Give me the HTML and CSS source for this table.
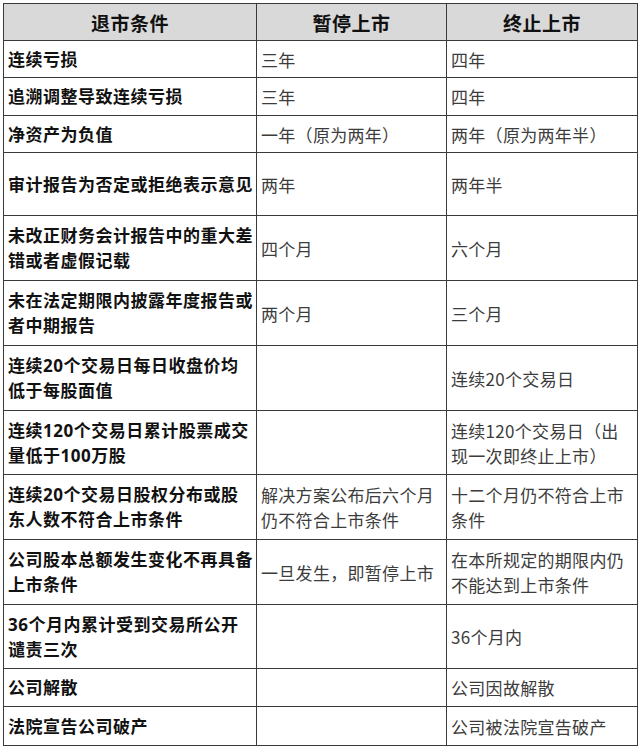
FILE: index.html
```html
<!DOCTYPE html>
<html lang="zh-CN">
<head>
<meta charset="utf-8">
<title>退市条件</title>
<link rel="stylesheet" href="styles.css">
</head>
<body>
<table class="delist">
  <colgroup>
    <col class="c1">
    <col class="c2">
    <col class="c3">
  </colgroup>
  <thead>
    <tr class="head">
      <th>退市条件</th>
      <th>暂停上市</th>
      <th>终止上市</th>
    </tr>
  </thead>
  <tbody>
    <tr class="r37"><td class="cond">连续亏损</td><td>三年</td><td>四年</td></tr>
    <tr class="r38"><td class="cond">追溯调整导致连续亏损</td><td>三年</td><td>四年</td></tr>
    <tr class="r37"><td class="cond">净资产为负值</td><td>一年（原为两年）</td><td>两年（原为两年半）</td></tr>
    <tr class="r63"><td class="cond">审计报告为否定或拒绝表示意见</td><td>两年</td><td>两年半</td></tr>
    <tr class="r65"><td class="cond">未改正财务会计报告中的重大差错或者虚假记载</td><td>四个月</td><td>六个月</td></tr>
    <tr class="r65"><td class="cond">未在法定期限内披露年度报告或者中期报告</td><td>两个月</td><td>三个月</td></tr>
    <tr class="r65"><td class="cond">连续20个交易日每日收盘价均低于每股面值</td><td></td><td>连续20个交易日</td></tr>
    <tr class="r64"><td class="cond">连续120个交易日累计股票成交量低于100万股</td><td></td><td>连续120个交易日（出现一次即终止上市）</td></tr>
    <tr class="r65"><td class="cond">连续20个交易日股权分布或股东人数不符合上市条件</td><td>解决方案公布后六个月仍不符合上市条件</td><td>十二个月仍不符合上市条件</td></tr>
    <tr class="r65"><td class="cond">公司股本总额发生变化不再具备上市条件</td><td>一旦发生，即暂停上市</td><td>在本所规定的期限内仍不能达到上市条件</td></tr>
    <tr class="r64"><td class="cond">36个月内累计受到交易所公开谴责三次</td><td></td><td>36个月内</td></tr>
    <tr class="r38"><td class="cond">公司解散</td><td></td><td>公司因故解散</td></tr>
    <tr class="r39"><td class="cond">法院宣告公司破产</td><td></td><td>公司被法院宣告破产</td></tr>
  </tbody>
</table>
</body>
</html>
```

FILE: styles.css
```css
html, body {
  margin: 0;
  padding: 0;
  background: #ffffff;
}

body {
  padding: 3px 0 0 3px;
  font-family: "Noto Sans CJK SC", "Noto Sans", "Liberation Sans", sans-serif;
}

.delist {
  border-collapse: collapse;
  table-layout: fixed;
  width: 634px;
}

.c1 { width: 253px; }
.c2 { width: 190px; }
.c3 { width: 191px; }

.delist th,
.delist td {
  border: 1px solid #3a3a3a;
  padding: 0 4px;
  font-size: 17px;
  line-height: 25px;
  vertical-align: middle;
  text-align: left;
  color: #3c3c3c;
  letter-spacing: 0.3px;
}

.delist th {
  background: #d9d9d9;
  text-align: center;
  font-size: 19px;
  font-weight: bold;
  color: #111111;
  letter-spacing: 0.5px;
}

.delist td.cond {
  font-family: "Open Sans", "Noto Sans CJK SC", sans-serif;
  font-weight: bold;
  color: #111111;
  padding-left: 4px;
  padding-right: 1.5px;
  letter-spacing: 0.5px;
}

.head { height: 37px; }
.r37 { height: 37px; }
.r38 { height: 38px; }
.r39 { height: 39px; }
.r63 { height: 63px; }
.r64 { height: 64px; }
.r65 { height: 65px; }
```
